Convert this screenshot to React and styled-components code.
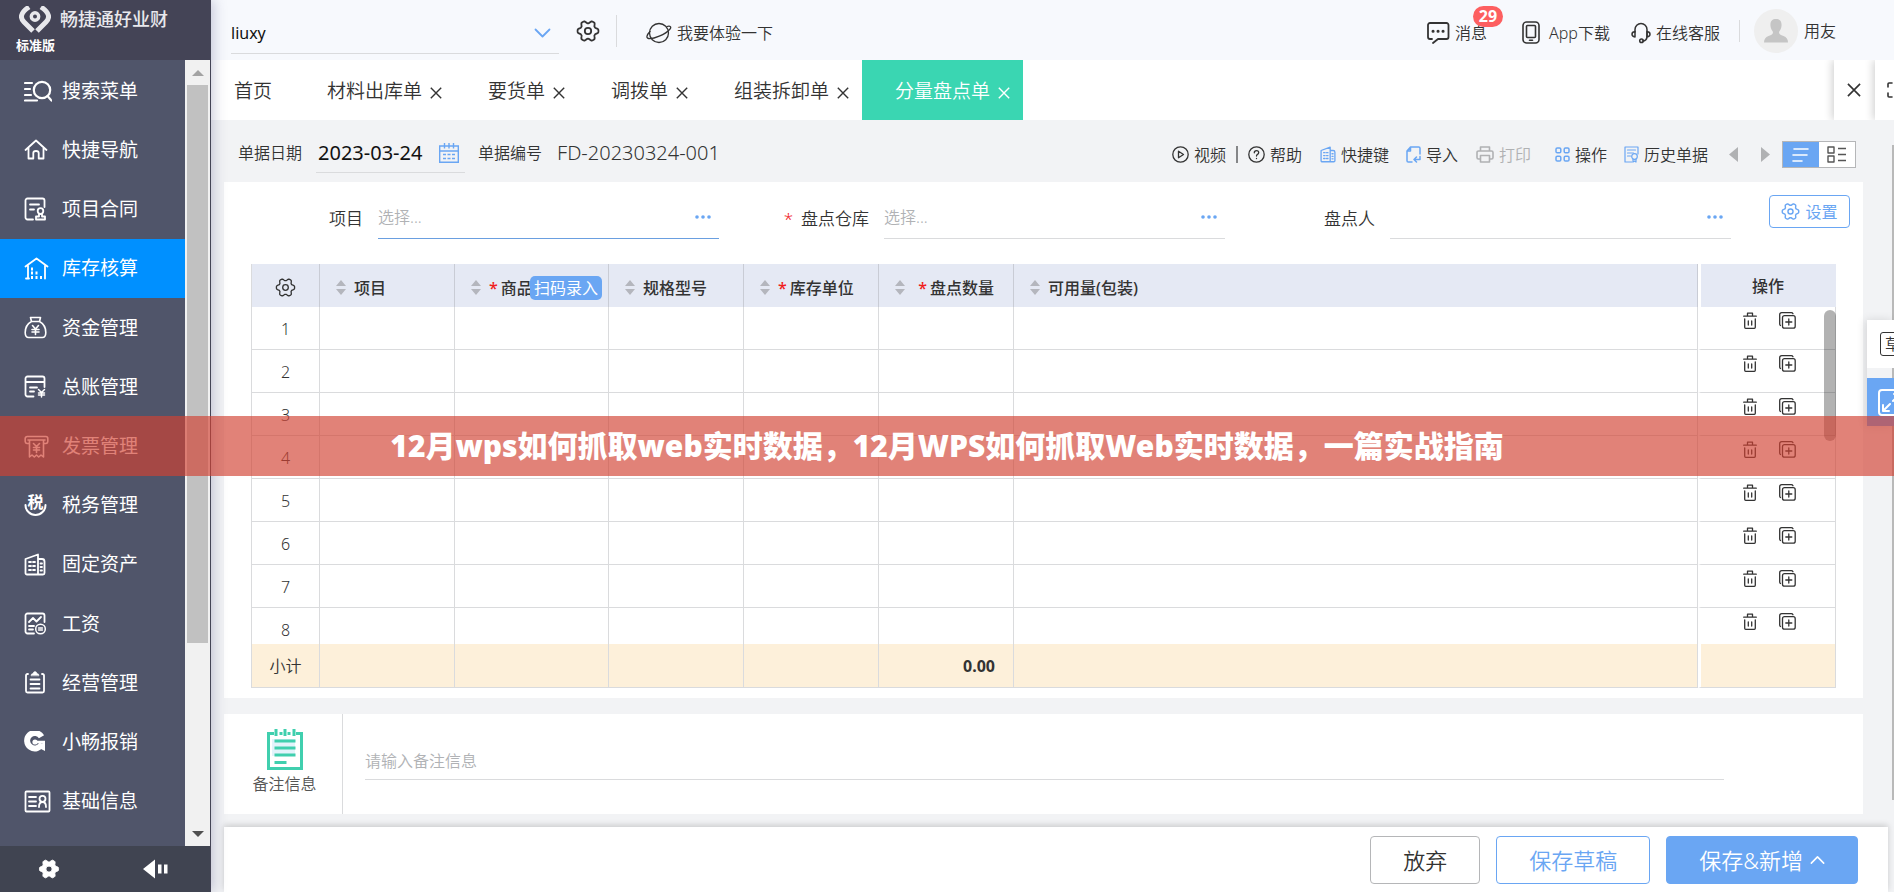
import React, { useState } from 'react';
import styled, { createGlobalStyle, css } from 'styled-components';

/* ---------- icons ---------- */

const Svg = ({ w = 22, h = w, box, sw = 1.5, children, ...rest }) => (
	<svg
		width={w}
		height={h}
		viewBox={box || `0 0 ${w} ${h}`}
		fill='none'
		stroke='currentColor'
		strokeWidth={sw}
		strokeLinecap='round'
		strokeLinejoin='round'
		aria-hidden='true'
		{...rest}
	>
		{children}
	</svg>
);

// six flattened lobes, one of them pointing to the right
const gearPath = (() => {
	const points = [];
	for (let i = 0; i < 72; i++) {
		const angle = (i * Math.PI) / 36;
		const lobe = Math.max(-1, Math.min(1, 1.4 * Math.cos(6 * angle) + 0.2));
		const r = 9.1 + 1.3 * lobe;
		points.push(`${(12 + r * Math.cos(angle)).toFixed(2)} ${(12 + r * Math.sin(angle)).toFixed(2)}`);
	}
	return `M${points.join('L')}Z`;
})();

const GearIcon = ({ size = 24, sw = 1.8 }) => (
	<Svg w={size} box='0 0 24 24' sw={sw}>
		<path d={gearPath} />
		<circle cx='12' cy='12' r='3.2' />
	</Svg>
);

const GearSolidIcon = () => (
	<Svg w={22} box='0 0 24 24' sw={1}>
		<path d={`${gearPath}M12 8.6a3.4 3.4 0 1 0 0 6.8a3.4 3.4 0 1 0 0-6.8Z`} fill='currentColor' fillRule='evenodd' />
	</Svg>
);

const LogoIcon = () => (
	<Svg w={32} h={27} sw={5} strokeLinecap='butt' strokeLinejoin='miter'>
		<path d='M10 1C1 7 1 12 5 16l9 9' />
		<path d='M22 1c9 6 9 11 5 15l-9 9' />
		<circle cx='16' cy='10.5' r='3.7' strokeWidth='3.4' />
	</Svg>
);

const SearchMenuIcon = () => (
	<Svg w={28} h={22} sw={2.2}>
		<path d='M1 3h7M1 9h5M1 15h6M1 20.5h12' />
		<circle cx='18' cy='10' r='8.2' />
		<path d='M23.5 16l4 4.5' />
	</Svg>
);

const HomeIcon = () => (
	<Svg w={24} h={21} sw={1.8}>
		<path d='M1.5 11L12 1.5 22.5 11M4.5 9v10.5h4.8V14q0-2 2.7-2t2.7 2v5.500h4.800V9' />
	</Svg>
);

const ContractIcon = () => (
	<Svg w={22} h={24} sw={1.8}>
		<path d='M9 22.500H3.500a2 2 0 0 1-2-2v-17a2 2 0 0 1 2-2h15a2 2 0 0 1 2 2V10M6 7.500h9M6 12.500h4' />
		<circle cx='16.500' cy='14' r='2.800' />
		<path d='M12 22.500v-3h3v-2.500h3v2.500h3v3z' />
	</Svg>
);

const WarehouseIcon = () => (
	<Svg w={25} h={23} sw={1.8}>
		<path d='M1.500 9.500L12.500 1.500l11 8M4 8.500V21.500M21 8.500V21.500M2 21.500h3' />
		<path d='M7 12h2M7 16h2M11.500 16h2M7 20.500h2M11.500 20.500h2M16 20.500h2' strokeWidth='3' strokeLinecap='butt' />
	</Svg>
);

const MoneyBagIcon = () => (
	<Svg w={23} h={23} sw={1.6}>
		<path d='M6.500 1.500h10l-1 4h-8zM7.500 5.500C3 8 1.200 12 1.200 16.500q0 5 3.500 5h13.600q3.500 0 3.500-5C21.800 12 20 8 15.500 5.500' />
		<path d='M8.500 9.500l3 3.500 3-3.500M11.500 13v5.500M8 13.500h7M8 16h7' />
	</Svg>
);

const LedgerIcon = () => (
	<Svg w={22} h={23} sw={1.8}>
		<path d='M9.500 21.500H3.500a2 2 0 0 1-2-2v-16a2 2 0 0 1 2-2h15a2 2 0 0 1 2 2V12M1.500 7h19M6 12.500h7M6 16.500h4' />
		<path d='M14.500 14.500l3 3 3-3M17.500 17.500V22M14.500 18h6M14.500 20h6' strokeWidth='1.500' />
	</Svg>
);

const InvoiceIcon = () => (
	<Svg w={25} h={23} sw={1.6}>
		<path d='M4.500 8.500H3a2 2 0 0 1-1.800-2V3.500a2 2 0 0 1 2-2h18.600a2 2 0 0 1 2 2v3a2 2 0 0 1-1.800 2h-1.500M4 5h17M5.500 5v17l2.500-2 2.300 2 2.200-2 2.200 2 2.300-2 2.500 2V5' />
		<path d='M9.500 8.500l3 3 3-3M12.500 11.500v6M9.500 12.500h6M9.500 15h6' />
	</Svg>
);

const TaxIcon = () => (
	<Svg w={24} h={24} sw={2}>
		<path d='M1.500 12a10 10 0 0 0 20 0' />
		<text x='11.500' y='15' textAnchor='middle' fontSize='16' fontWeight='700' fill='currentColor' stroke='none'>
			税
		</text>
	</Svg>
);

const BuildingIcon = ({ w = 22, h = 23, sw = 1.8 }) => (
	<Svg w={w} h={h} box='0 0 22 23' sw={sw}>
		<path d='M14 21.500H3a1.500 1.500 0 0 1-1.500-1.500V6L14 1.500zM14 6h4a2.500 2.500 0 0 1 2.500 2.500V20a1.500 1.500 0 0 1-1.500 1.500h-5' />
		<path d='M5 9h2M9 9h2M5 13h2M9 13h2M5 17h2M9 17h2M16.500 10.500h1.500M16.500 14h1.500M16.500 17.500h1.500' />
	</Svg>
);

const SalaryIcon = () => (
	<Svg w={23} h={23} sw={1.8}>
		<path d='M10 21.500H3.500a2 2 0 0 1-2-2v-16a2 2 0 0 1 2-2h15a2 2 0 0 1 2 2V10M5 10l4-4 3.500 3.500L17 5M5 14h5M5 17.500h4' />
		<circle cx='16.500' cy='17' r='4.800' strokeWidth='1.500' />
		<path d='M14.500 16h4M14.500 18h4' strokeWidth='1.300' />
	</Svg>
);

const ClipboardIcon = () => (
	<Svg w={22} h={23} sw={1.8}>
		<path d='M4 3H3.500a1.500 1.500 0 0 0-1.500 1.500V20a1.500 1.500 0 0 0 1.500 1.500h15A1.500 1.500 0 0 0 20 20V4.500A1.500 1.500 0 0 0 18.500 3H18M6.500 8.500h9M6.500 13h9M6.500 17.500h9' />
		<path d='M7 4.500q0-2 2-2 .500-2 2-2t2 2q2 0 2 2z' fill='currentColor' strokeWidth='.5' />
	</Svg>
);

const ExpenseIcon = () => (
	<Svg w={22} h={22} sw={6} strokeLinecap='butt'>
		<path d='M17.500 5.800A7.700 7.700 0 1 0 18 12.500' />
		<path d='M21 11v9l-9-4.500z' fill='currentColor' stroke='none' />
		<circle cx='11' cy='11' r='2.600' fill='currentColor' stroke='none' />
		<path d='M12 11h9' strokeWidth='2.500' />
	</Svg>
);

const BaseInfoIcon = () => (
	<Svg w={27} h={23} sw={1.8}>
		<rect x='1.500' y='1.500' width='24' height='20' rx='1' />
		<path d='M5 7h7M5 11.500h7M5 16h7M15 17q0-5 3.500-5t3.500 5' />
		<circle cx='18.500' cy='8.800' r='3' />
	</Svg>
);

const CollapseIcon = () => (
	<Svg w={25} h={20} sw={0}>
		<path d='M0 10L12 .5v19zM15 5.500h3.500v9H15zM21 5.500h3.500v9H21z' fill='currentColor' />
	</Svg>
);

const ChevronIcon = ({ up, w = 17, sw = 1.8 }) => (
	<Svg w={w} h={10} box='0 0 17 10' sw={sw}>
		<path d={up ? 'M1.500 8.500L8.500 1.500l7 7' : 'M1.500 1.500l7 7 7-7'} />
	</Svg>
);

const PlanetIcon = () => (
	<Svg w={26} h={22} sw={1.3}>
		<circle cx='13' cy='11' r='9.500' />
		<path d='M4 9.500C.5 13 0 16 2.500 16.500c4.500 1 17-4 21.500-9.500 1.500-2 .5-3.500-3-2.500' />
	</Svg>
);

const MessageIcon = () => (
	<Svg w={23} h={22} sw={1.8}>
		<path d='M6 21l5-4h8.500a2 2 0 0 0 2-2V3a2 2 0 0 0-2-2H3a2 2 0 0 0-2 2v12a2 2 0 0 0 2 2h2' />
		<path d='M6 9.200h.1M11 9.200h.1M16 9.200h.1' strokeWidth='3' />
	</Svg>
);

const PhoneIcon = () => (
	<Svg w={18} h={23} sw={1.6}>
		<rect x='1' y='1' width='16' height='21' rx='3.500' />
		<rect x='4.500' y='4.500' width='9' height='12' rx='1' />
		<path d='M7.500 19.300h3' />
	</Svg>
);

const HeadsetIcon = () => (
	<Svg w={20} h={22} sw={1.5}>
		<path d='M4 10V7.500a6 6 0 0 1 12 0V14q0 5-4.500 5' />
		<path d='M4 9.500v5.500Q1 14.500 1 12.200T4 9.500zM16 9.500v5.500q3-.5 3-2.800T16 9.500z' />
		<circle cx='10.500' cy='18.800' r='1.800' />
	</Svg>
);

const PersonIcon = () => (
	<Svg w={24} h={24} sw={0}>
		<path
			d='M12 0c4 0 6 2.500 5.500 7-.3 3-1.500 4.500-2.500 6 0 2.500 1.500 3 4.500 4q4.500 1.500 4.500 6.500H0Q0 18.500 4.500 17c3-1 4.500-1.500 4.500-4-1-1.500-2.200-3-2.500-6C6 2.500 8 0 12 0z'
			fill='currentColor'
		/>
	</Svg>
);

const CloseIcon = ({ size = 12, sw = 1.4 }) => (
	<Svg w={size} box='0 0 12 12' sw={sw} strokeLinecap='butt'>
		<path d='M.8.8l10.400 10.400M11.200.8L.8 11.200' />
	</Svg>
);

const CalendarIcon = () => (
	<Svg w={20} h={20} sw={1.4} strokeLinecap='butt' strokeLinejoin='miter'>
		<path d='M.7 3h18.600v16.300H.7zM.7 8h18.600' />
		<path d='M5.500 0v5.500M10 0v5.500M14.500 0v5.500' />
		<path d='M4 11.500h3M8.500 11.500h3M13 11.500h3M4 15.500h3M8.500 15.500h3M13 15.500h3' />
	</Svg>
);

const PlayIcon = () => (
	<Svg w={17} sw={1.3}>
		<circle cx='8.500' cy='8.500' r='7.700' />
		<path d='M6.500 5.200v6.600l5-3.300z' />
	</Svg>
);

const HelpIcon = () => (
	<Svg w={17} sw={1.3}>
		<circle cx='8.500' cy='8.500' r='7.700' />
		<path d='M6.300 6.800q0-2.200 2.200-2.200t2.200 2q0 1.200-1.200 1.800-1 .5-1 1.600M8.500 12.300v.2' />
	</Svg>
);

const ImportIcon = () => (
	<Svg w={15} h={17} sw={1.5}>
		<path d='M6 16H2.300A1.300 1.300 0 0 1 1 14.700V5l3.500-4h8.200A1.300 1.300 0 0 1 14 2.300V8M4.500 1v4H1' />
		<path d='M14 10.500v3H8.500M10.500 11l-2.500 2.500 2.500 2.500' />
	</Svg>
);

const PrintIcon = () => (
	<Svg w={18} h={17} sw={1.6}>
		<path d='M4.500 5V1h9v4M4.500 13H2.500A1.500 1.500 0 0 1 1 11.500v-5A1.500 1.500 0 0 1 2.500 5h13A1.500 1.500 0 0 1 17 6.500v5a1.500 1.500 0 0 1-1.500 1.500h-2M4.500 9.500h9V16h-9z' />
	</Svg>
);

const AppsIcon = () => (
	<Svg w={15} sw={1.5}>
		<rect x='1' y='1' width='4.800' height='4.800' rx='1.300' />
		<rect x='9.200' y='1' width='4.800' height='4.800' rx='1.300' />
		<rect x='1' y='9.200' width='4.800' height='4.800' rx='1.300' />
		<rect x='9.200' y='9.200' width='4.800' height='4.800' rx='1.300' />
	</Svg>
);

const HistoryIcon = () => (
	<Svg w={15} h={17} sw={1.2}>
		<path d='M8 16H1V1h13v7M3.500 4h8M3.500 7h6M3.500 10h3' />
		<circle cx='10.500' cy='10.500' r='2.800' />
		<path d='M9 13v3l1.500-1 1.500 1v-3' />
	</Svg>
);

const ArrowIcon = ({ right }) => (
	<Svg w={9} h={15} sw={0}>
		<path d={right ? 'M0 0l9 7.500L0 15z' : 'M9 0L0 7.500 9 15z'} fill='currentColor' />
	</Svg>
);

const ListIcon = () => (
	<Svg w={18} h={16} sw={1.6}>
		<path d='M2 2h14M1 8h14M1 14h9' />
	</Svg>
);

const CardsIcon = () => (
	<Svg w={20} h={17} sw={1.4} strokeLinecap='butt'>
		<path d='M1 1h6v6H1zM1 10h6v6H1zM11 2.500h8M11 8.500h8M11 14.500h8' />
	</Svg>
);

const DotsIcon = () => (
	<Svg w={16} h={4} sw={0}>
		<g fill='currentColor'>
			<circle cx='2' cy='2' r='1.800' />
			<circle cx='8' cy='2' r='1.800' />
			<circle cx='14' cy='2' r='1.800' />
		</g>
	</Svg>
);

const SortIcon = () => (
	<Svg w={10} h={15} sw={0}>
		<path d='M5 0l5 6H0zM5 15l5-6H0z' fill='#b4b6bd' />
	</Svg>
);

const TrashIcon = () => (
	<Svg w={14} h={17} sw={1.3}>
		<path d='M.7 4.200h12.600M4.500 4V1.200h5V4M1.700 6.800v8.500q0 1 1 1h8.600q1 0 1-1V6.800M5.300 9v4M8.700 9v4' />
	</Svg>
);

const CopyIcon = () => (
	<Svg w={17} h={17} sw={1.3}>
		<path d='M1.500 13.500q-.8-.5-.8-1.500V2.700q0-2 2-2h9.500q1.300 0 1.800 1' />
		<rect x='3.500' y='3.700' width='12.700' height='12.500' rx='2' />
		<path d='M9.800 7v6M6.800 10h6' />
	</Svg>
);

const NoteIcon = () => (
	<Svg w={36} h={41} sw={3} strokeLinecap='butt' strokeLinejoin='miter'>
		<path d='M5 10h23v17H5z' fill='#e3f3fb' stroke='none' />
		<path d='M7 4.500H1.500v35h33v-35H29M12.500 4.500h3M20.500 4.500h3' />
		<path d='M9 0v7M18 0v7M27 0v7' />
		<path d='M7.500 12h21M7.500 19h21M7.500 26h21M7.500 33.500h12' />
	</Svg>
);

const CornersIcon = () => (
	<Svg w={16} h={16} sw={1.6}>
		<path d='M1 5V2q0-1 1-1h3M11 1h3q1 0 1 1v3M15 11v3q0 1-1 1h-3M5 15H2q-1 0-1-1v-3' />
	</Svg>
);

const ExpandIcon = () => (
	<Svg w={27} h={27} sw={2}>
		<rect x='1' y='1' width='25' height='25' rx='3' />
		<path d='M12 15l-7 7M5 16v6h6M15 12l7-7M16 5h6v6' />
	</Svg>
);

/* ---------- data ---------- */

const menu = [
	{ label: '搜索菜单', Icon: SearchMenuIcon },
	{ label: '快捷导航', Icon: HomeIcon },
	{ label: '项目合同', Icon: ContractIcon },
	{ label: '库存核算', Icon: WarehouseIcon },
	{ label: '资金管理', Icon: MoneyBagIcon },
	{ label: '总账管理', Icon: LedgerIcon },
	{ label: '发票管理', Icon: InvoiceIcon },
	{ label: '税务管理', Icon: TaxIcon },
	{ label: '固定资产', Icon: BuildingIcon },
	{ label: '工资', Icon: SalaryIcon },
	{ label: '经营管理', Icon: ClipboardIcon },
	{ label: '小畅报销', Icon: ExpenseIcon },
	{ label: '基础信息', Icon: BaseInfoIcon },
];

const tabs = ['材料出库单', '要货单', '调拨单', '组装拆卸单', '分量盘点单'];

const columns = [
	{ label: '项目', width: 135 },
	{ label: '商品', width: 154, required: true, scan: true },
	{ label: '规格型号', width: 135 },
	{ label: '库存单位', width: 135, required: true },
	{ label: '盘点数量', width: 135, required: true, numeric: true },
	{ label: '可用量(包装)' },
];

const rows = [1, 2, 3, 4, 5, 6, 7, 8];

/* ---------- components ---------- */

const Sidebar = () => {
	const [active, setActive] = useState('库存核算');

	return (
		<Side>
			<Brand>
				<div className='name'>
					<LogoIcon />
					畅捷通好业财
				</div>
				<div className='edition'>标准版</div>
			</Brand>
			<SideBody>
				<Menu>
					{menu.map(({ label, Icon }) => (
						<MenuItem key={label} href='#!' $active={label === active} onClick={() => setActive(label)}>
							<span className='icon'>
								<Icon />
							</span>
							{label}
						</MenuItem>
					))}
				</Menu>
				<SideScroll>
					<ScrollArrow $up />
					<div className='thumb' />
					<ScrollArrow />
				</SideScroll>
			</SideBody>
			<SideFooter>
				<button aria-label='系统设置'>
					<GearSolidIcon />
				</button>
				<button aria-label='收起菜单'>
					<CollapseIcon />
				</button>
			</SideFooter>
		</Side>
	);
};

const TopBar = () => (
	<Top>
		<Company>
			<select aria-label='企业' defaultValue='liuxy'>
				<option>liuxy</option>
			</select>
			<ChevronIcon />
		</Company>
		<IconButton aria-label='设置'>
			<GearIcon />
		</IconButton>
		<Divider $tall />
		<TopLink href='#!' className='trial'>
			<PlanetIcon />
			我要体验一下
		</TopLink>
		<TopRight>
			<TopLink href='#!'>
				<MessageIcon />
				消息
				<Badge>29</Badge>
			</TopLink>
			<TopLink href='#!' className='app'>
				<PhoneIcon />
				App下载
			</TopLink>
			<TopLink href='#!'>
				<HeadsetIcon />
				在线客服
			</TopLink>
			<Divider />
			<Avatar>
				<PersonIcon />
			</Avatar>
			用友
		</TopRight>
	</Top>
);

const TabBar = () => {
	const [active, setActive] = useState('分量盘点单');

	return (
		<Tabs>
			<HomeTab>首页</HomeTab>
			{tabs.map((label) => (
				<Tab key={label} $active={label === active}>
					<button onClick={() => setActive(label)}>{label}</button>
					<button className='close' aria-label={`关闭${label}`}>
						<CloseIcon />
					</button>
				</Tab>
			))}
			<TabActions>
				<button aria-label='全部关闭'>
					<CloseIcon size={14} />
				</button>
				<button className='cut' aria-label='全屏'>
					<CornersIcon />
				</button>
			</TabActions>
		</Tabs>
	);
};

const DocBar = () => (
	<Doc>
		<label htmlFor='doc-date'>单据日期</label>
		<DateField>
			<input id='doc-date' defaultValue='2023-03-24' />
			<CalendarIcon />
		</DateField>
		<span>单据编号</span>
		<DocNumber>FD-20230324-001</DocNumber>
		<Tools>
			<Tool>
				<PlayIcon />
				视频
			</Tool>
			<ToolDivider />
			<Tool>
				<HelpIcon />
				帮助
			</Tool>
			<Tool $blue $gap={18}>
				<BuildingIcon w={16} h={17} />
				<span>快捷键</span>
			</Tool>
			<Tool $blue $gap={17}>
				<ImportIcon />
				<span>导入</span>
			</Tool>
			<Tool disabled $gap={18}>
				<PrintIcon />
				打印
			</Tool>
			<Tool $blue $gap={24}>
				<AppsIcon />
				<span>操作</span>
			</Tool>
			<Tool $blue $gap={17}>
				<HistoryIcon />
				<span>历史单据</span>
			</Tool>
			<Tool disabled $gap={21} aria-label='上一张'>
				<ArrowIcon />
			</Tool>
			<Tool disabled $gap={23} aria-label='下一张'>
				<ArrowIcon right />
			</Tool>
			<ViewSwitch>
				<button className='on' aria-label='列表视图'>
					<ListIcon />
				</button>
				<button aria-label='卡片视图'>
					<CardsIcon />
				</button>
			</ViewSwitch>
		</Tools>
	</Doc>
);

const Field = ({ id, label, placeholder, required, focused, first }) => (
	<FieldBox $first={first}>
		<label htmlFor={id}>
			{required && <Star>*</Star>}
			{label}
		</label>
		<Lookup $focused={focused}>
			<input id={id} placeholder={placeholder} />
			<button aria-label={`选择${label}`}>
				<DotsIcon />
			</button>
		</Lookup>
	</FieldBox>
);

const EntryTable = () => (
	<TableWrap>
		<Table>
			<colgroup>
				<col width='69' />
				{columns.map(({ label, width }) => (
					<col key={label} width={width} />
				))}
				<col width='138' />
			</colgroup>
			<thead>
				<tr>
					<th className='index'>
						<IconButton aria-label='列设置'>
							<GearIcon size={21} sw={1.5} />
						</IconButton>
					</th>
					{columns.map(({ label, required, numeric, scan }) => (
						<th key={label}>
							<HeadCell $numeric={numeric}>
								<SortIcon />
								<span>
									{required && <Star>*</Star>}
									{label}
								</span>
								{scan && <ScanButton>扫码录入</ScanButton>}
							</HeadCell>
						</th>
					))}
					<th className='op'>操作</th>
				</tr>
			</thead>
			<tbody>
				{rows.map((row) => (
					<tr key={row}>
						<td className='index'>{row}</td>
						{columns.map(({ label }) => (
							<td key={label} />
						))}
						<td className='op'>
							<RowActions>
								<IconButton aria-label={`删除第${row}行`}>
									<TrashIcon />
								</IconButton>
								<IconButton aria-label={`复制第${row}行`}>
									<CopyIcon />
								</IconButton>
							</RowActions>
						</td>
					</tr>
				))}
			</tbody>
			<tfoot>
				<tr>
					<td className='index'>小计</td>
					{columns.map(({ label, numeric }) => (
						<td key={label}>{numeric && '0.00'}</td>
					))}
					<td className='op' />
				</tr>
			</tfoot>
		</Table>
		<TableThumb />
	</TableWrap>
);

const App = () => (
	<Page>
		<GlobalStyle />
		<Sidebar />
		<Main>
			<TopBar />
			<TabBar />
			<DocBar />
			<Panel>
				<FormRow>
					<Field id='project' label='项目' placeholder='选择...' focused first />
					<Field id='warehouse' label='盘点仓库' placeholder='选择...' required />
					<Field id='person' label='盘点人' />
					<SettingButton>
						<GearIcon size={19} />
						设置
					</SettingButton>
				</FormRow>
				<EntryTable />
			</Panel>
			<Note>
				<label htmlFor='note'>
					<NoteIcon />
					<span>备注信息</span>
				</label>
				<input id='note' placeholder='请输入备注信息' />
			</Note>
			<ActionBar>
				<Button>放弃</Button>
				<Button $outline>保存草稿</Button>
				<Button $primary>
					保存&amp;新增
					<ChevronIcon up w={15} />
				</Button>
			</ActionBar>
			<PageThumb />
		</Main>
		<Floating>
			<button className='draft'>
				<span>草</span>
			</button>
			<button className='expand' aria-label='展开'>
				<ExpandIcon />
			</button>
		</Floating>
		<Banner>12月wps如何抓取web实时数据，12月WPS如何抓取Web实时数据，一篇实战指南</Banner>
	</Page>
);

/* ---------- styles ---------- */

const blue = '#6aa6f3';
const line = '#dadbdd';

const GlobalStyle = createGlobalStyle`
	* {
		box-sizing: border-box;
	}
	body {
		margin: 0;
		overflow: hidden;
		color: #333;
		font: 350 16px/24px 'Noto Sans', 'Noto Sans CJK SC', sans-serif;
	}
	button, input, select {
		margin: 0;
		padding: 0;
		border: 0;
		background: none;
		color: inherit;
		font: inherit;
		outline: 0;
	}
	button {
		cursor: pointer;
	}
	input {
		min-width: 0;
	}
	input::placeholder {
		color: #b0b2b5;
		opacity: 1;
	}
	a {
		color: inherit;
		text-decoration: none;
	}
	svg {
		display: block;
		flex: none;
	}
`;

const Page = styled.div`
	display: flex;
	min-height: 100vh;
	background: #f2f3f5;
`;

const Side = styled.aside`
	position: relative;
	z-index: 2;
	display: flex;
	flex-direction: column;
	width: 211px;
	flex: none;
	background: #50556a;
	border-right: 1px solid #444456;
	box-shadow: 3px 0 12px rgba(60, 60, 120, 0.25);
	color: #fff;
`;

const Brand = styled.div`
	height: 60px;
	padding: 4px 0 0 19px;
	background: #444456;

	.name {
		display: flex;
		align-items: center;
		gap: 9px;
		height: 30px;
		color: #e8e8ec;
		font-size: 18px;
		font-weight: 500;
	}

	.edition {
		margin-left: -3px;
		font-size: 13px;
		font-weight: 700;
		line-height: 22px;
	}
`;

const SideBody = styled.div`
	display: flex;
	flex: 1;
`;

const Menu = styled.nav`
	display: flex;
	flex-direction: column;
	flex: 1;
	padding: 1px 0 15px;
`;

const MenuItem = styled.a`
	display: flex;
	align-items: center;
	flex: 1;
	padding-left: 24px;
	background: ${({ $active }) => ($active ? '#0090ff' : 'none')};
	font-size: 19px;
	font-weight: 400;

	.icon {
		width: 38px;
	}
`;

const SideScroll = styled.div`
	display: flex;
	flex-direction: column;
	align-items: center;
	width: 25px;
	background: #f1f1f1;

	.thumb {
		width: 21px;
		flex: 1;
		margin-bottom: 178px;
		background: #c1c1c1;
	}
`;

const ScrollArrow = styled.div`
	display: flex;
	align-items: center;
	justify-content: center;
	height: 25px;

	&::before {
		content: '';
		border: 6px solid transparent;
		${({ $up }) =>
			$up
				? 'border-top: 0; border-bottom-color: #a3a3a3;'
				: 'border-bottom: 0; border-top-color: #505050;'}
	}
`;

const SideFooter = styled.div`
	display: flex;
	align-items: center;
	justify-content: space-between;
	height: 46px;
	padding: 0 42px 0 38px;
	background: #404451;
`;

const Main = styled.main`
	position: relative;
	display: flex;
	flex-direction: column;
	flex: 1;
	min-width: 0;
`;

const Top = styled.header`
	display: flex;
	align-items: center;
	height: 60px;
	padding: 2px 58px 0 20px;
	background: #f7f9fd;

	.trial {
		margin-left: 29px;
	}
`;

const Company = styled.div`
	display: flex;
	align-items: center;
	width: 328px;
	height: 42px;
	margin: 4px 17px 0 0;
	padding: 0 8px 0 0;
	border-bottom: 1px solid ${line};
	color: ${blue};

	select {
		flex: 1;
		appearance: none;
		color: #111;
		font-weight: 400;
	}
`;

const IconButton = styled.button`
	display: inline-flex;
	vertical-align: middle;
	color: #333;
`;

const Divider = styled.span`
	width: 1px;
	height: ${({ $tall }) => ($tall ? 32 : 22)}px;
	margin: 0 ${({ $tall }) => ($tall ? 0 : 14)}px 0 ${({ $tall }) => ($tall ? 16 : 19)}px;
	background: ${line};
`;

const TopLink = styled.a`
	position: relative;
	display: flex;
	align-items: center;
	gap: 5px;
	padding-top: 3px;
`;

const Badge = styled.span`
	position: absolute;
	top: -12px;
	right: -16px;
	padding: 0 6px;
	border-radius: 11px;
	background: #fd5f60;
	color: #fff;
	font-weight: 700;
	line-height: 21px;
`;

const TopRight = styled.div`
	display: flex;
	align-items: center;
	margin-left: auto;

	.app {
		margin: 0 21px 0 35px;
		gap: 9px;
	}
`;

const Avatar = styled.span`
	display: flex;
	align-items: center;
	justify-content: center;
	width: 44px;
	height: 44px;
	margin-right: 6px;
	border-radius: 50%;
	background: #efefef;
	color: #c5c5c5;
`;

const Tabs = styled.div`
	display: flex;
	height: 60px;
	background: #fff;
	font-size: 19px;
	overflow: hidden;
`;

const HomeTab = styled.button`
	padding: 2px 22px 0 23px;
`;

const Tab = styled.div`
	display: flex;
	align-items: center;
	gap: 8px;
	padding: 2px 13px 0 33px;

	.close {
		padding-top: 3px;
	}

	${({ $active }) =>
		$active &&
		css`
			background: #3ad6b2;
			color: #fff;
		`}
`;

const TabActions = styled.div`
	display: flex;
	margin-left: auto;

	button {
		display: flex;
		align-items: center;
		width: 41px;
		padding-left: 13px;
		background: #fff;
		box-shadow: -2px 0 8px rgba(0, 0, 0, 0.18);
	}

	.cut {
		width: 19px;
		padding-left: 12px;
		overflow: hidden;
	}
`;

const Doc = styled.div`
	display: flex;
	align-items: center;
	height: 62px;
	padding: 4px 38px 0 27px;
`;

const DateField = styled.div`
	display: flex;
	align-items: center;
	width: 149px;
	height: 39px;
	margin: 0 13px 0 14px;
	padding: 0 6px 0 2px;
	border-bottom: 1px solid ${line};
	color: ${blue};

	input {
		flex: 1;
		color: #111;
		font-size: 20px;
		font-weight: 400;
	}
`;

const DocNumber = styled.span`
	margin-left: 15px;
	font-size: 20px;
`;

const Tools = styled.div`
	display: flex;
	align-items: center;
	margin-left: auto;
	padding-top: 3px;
`;

const Tool = styled.button`
	display: flex;
	align-items: center;
	gap: 5px;
	margin-left: ${({ $gap = 0 }) => $gap}px;
	color: ${({ $blue }) => ($blue ? blue : '#333')};

	span {
		color: #333;
	}

	&:disabled {
		color: #b0b1b3;
	}
`;

const ToolDivider = styled.span`
	width: 2px;
	height: 17px;
	margin: 0 10px;
	background: #858688;
`;

const ViewSwitch = styled.div`
	display: flex;
	height: 27px;
	margin-left: 12px;
	border: 1px solid #b5b6b8;
	background: #fff;
	color: #555;

	button {
		display: flex;
		align-items: center;
		justify-content: center;
		width: 36px;
	}

	.on {
		background: ${blue};
		color: #fff;
	}
`;

const Panel = styled.section`
	margin: 0 31px 16px 13px;
	padding-bottom: 10px;
	background: #fff;
`;

const FormRow = styled.div`
	display: flex;
	align-items: flex-start;
	height: 82px;
	padding: 13px 13px 0 0;
`;

const FieldBox = styled.div`
	display: flex;
	align-items: center;
	flex: 1 1 ${({ $first }) => ($first ? 495 : 506)}px;
	height: 44px;

	label {
		width: ${({ $first }) => ($first ? 139 : 150)}px;
		margin-right: 15px;
		padding-top: 4px;
		text-align: right;
		font-size: 17px;
	}
`;

const Star = styled.span`
	margin-right: 3px;
	color: #f0201c;

	${FieldBox} & {
		margin-right: 8px;
	}
`;

const Lookup = styled.div`
	display: flex;
	align-items: center;
	flex: 1;
	height: 44px;
	padding-right: 8px;
	border-bottom: 1px solid ${({ $focused }) => ($focused ? '#6a9fe0' : line)};
	color: ${blue};

	input {
		flex: 1;
		color: #333;
	}
`;

const SettingButton = styled.button`
	display: flex;
	align-items: center;
	justify-content: center;
	gap: 5px;
	width: 81px;
	height: 33px;
	margin-left: 38px;
	border: 1px solid ${blue};
	border-radius: 4px;
	color: ${blue};
	font-weight: 400;
`;

const TableWrap = styled.div`
	position: relative;
	margin: 0 27px;
`;

const Table = styled.table`
	width: 100%;
	table-layout: fixed;
	border-spacing: 0;

	th,
	td {
		padding: 0;
		border-right: 1px solid ${line};
	}

	.index {
		border-left: 1px solid ${line};
		text-align: center;
	}

	.op {
		border-left: 3px solid #fff;
	}

	th {
		height: 43px;
		background: #e5e9f4;
		border-right-color: #c9ccd5;
		font-weight: 500;
	}

	th.op {
		border-right-color: #e5e9f4;
	}

	tbody td {
		height: 43px;
		padding-top: 10px;
		border-bottom: 1px solid ${line};
		vertical-align: top;
	}

	tbody .op {
		padding-top: 5px;
	}

	tbody tr:last-child td {
		height: 36px;
		border-bottom: 0;
	}

	tfoot td {
		height: 44px;
		padding-right: 18px;
		background: #fdf0da;
		border-bottom: 1px solid ${line};
		font-weight: 700;
		text-align: right;
	}

	tfoot .index {
		padding: 0;
		font-weight: inherit;
		text-align: center;
	}
`;

const HeadCell = styled.div`
	position: relative;
	display: flex;
	align-items: center;
	justify-content: ${({ $numeric }) => ($numeric ? 'space-between' : 'flex-start')};
	gap: 8px;
	padding: 4px 19px 0 16px;
	white-space: nowrap;
`;

const ScanButton = styled.button`
	position: absolute;
	right: 6px;
	height: 24px;
	padding: 0 4px;
	border-radius: 5px;
	background: ${blue};
	color: #fff;
	font-weight: 400;
`;

const RowActions = styled.div`
	display: flex;
	gap: 22px;
	padding-left: 42px;
`;

const TableThumb = styled.div`
	position: absolute;
	top: 46px;
	right: 0;
	width: 12px;
	height: 131px;
	border-radius: 6px;
	background: rgba(0, 0, 0, 0.3);
`;

const Note = styled.section`
	display: flex;
	height: 100px;
	margin: 0 31px 13px 13px;
	padding-right: 139px;
	background: #fff;

	label {
		display: flex;
		flex-direction: column;
		align-items: center;
		width: 119px;
		padding: 15px 0 0 3px;
		border-right: 1px solid ${line};
		color: #40cfae;
	}

	span {
		padding-top: 2px;
		color: #555;
	}

	input {
		flex: 1;
		height: 37px;
		margin: 29px 0 0 22px;
		border-bottom: 1px solid ${line};
	}
`;

const ActionBar = styled.footer`
	display: flex;
	align-items: center;
	justify-content: flex-end;
	gap: 16px;
	flex: 1;
	min-height: 64px;
	margin: 0 6px 0 13px;
	padding: 0 30px 0 0;
	background: #fff;
	box-shadow: 0 -2px 6px rgba(0, 0, 0, 0.16);
`;

const Button = styled.button`
	display: flex;
	align-items: center;
	gap: 7px;
	height: 48px;
	padding: 0 32px;
	border: 1px solid #b5b6b8;
	border-radius: 4px;
	font-size: 22px;

	${({ $outline }) =>
		$outline &&
		css`
			border-color: ${blue};
			color: ${blue};
		`}

	${({ $primary }) =>
		$primary &&
		css`
			border-color: ${blue};
			background: ${blue};
			color: #fff;
		`}
`;

const PageThumb = styled.div`
	position: absolute;
	top: 145px;
	right: 0;
	width: 2px;
	height: 655px;
	background: #b9b9b9;
`;

const Floating = styled.div`
	position: absolute;
	z-index: 3;
	top: 320px;
	right: 0;
	display: flex;
	flex-direction: column;
	gap: 10px;
	width: 27px;
	overflow: hidden;
	box-shadow: -2px 0 10px rgba(0, 0, 0, 0.12);

	button {
		display: flex;
		align-items: center;
		height: 48px;
		padding-left: 13px;
		background: #fff;
	}

	.draft span {
		padding: 0 4px;
		border: 1px solid #333;
		border-radius: 3px;
		line-height: 22px;
	}

	.expand {
		padding-left: 11px;
		background: ${blue};
		color: #fff;
	}
`;

const Banner = styled.div`
	position: absolute;
	z-index: 4;
	top: 416px;
	left: 0;
	width: 100%;
	background: rgba(209, 66, 50, 0.66);
	color: #fff;
	font-size: 30px;
	font-weight: 900;
	line-height: 60px;
	text-align: center;
	white-space: nowrap;
`;

export default App;
